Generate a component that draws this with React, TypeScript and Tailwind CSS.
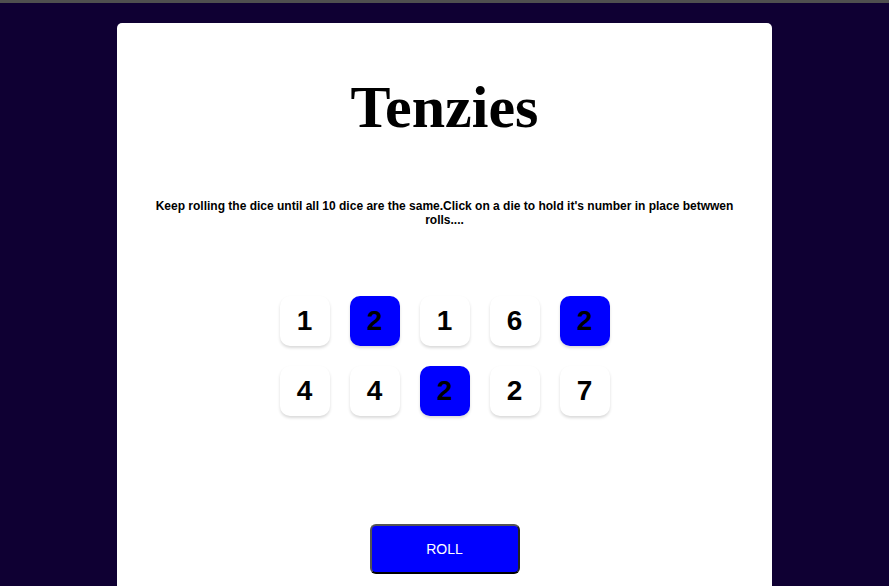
import React from "react";

const dice = [
  { v: 1, held: false },
  { v: 2, held: true },
  { v: 1, held: false },
  { v: 6, held: false },
  { v: 2, held: true },
  { v: 4, held: false },
  { v: 4, held: false },
  { v: 2, held: true },
  { v: 2, held: false },
  { v: 7, held: false },
];

export default function App() {
  return (
    <div className="w-[889px] h-[586px] overflow-hidden bg-[#0f0033] flex flex-col" style={{ fontFamily: '"Liberation Sans", Arial, sans-serif' }}>
      <div className="h-[3px] bg-[#4f4f4f] shrink-0" />
      <div className="mt-[20px] mx-auto w-[655px] h-[640px] bg-white rounded-[5px] flex flex-col items-center shrink-0">
        <h1
          className="mt-[54px] text-[60px] leading-none font-bold text-black"
          style={{ fontFamily: '"Liberation Serif", "Times New Roman", serif' }}
        >
          Tenzies
        </h1>
        <p className="mt-[62px] w-[600px] text-center text-[12px] leading-[14px] font-bold text-black">
          Keep rolling the dice until all 10 dice are the same.Click on a die to hold it's number in place betwwen rolls....
        </p>
        <div className="mt-[69px] grid grid-cols-5 gap-[20px]">
          {dice.map((d, i) => (
            <div
              key={i}
              className={`w-[50px] h-[50px] rounded-[10px] flex items-center justify-center text-[28px] font-bold text-black shadow-[0_2px_3px_rgba(0,0,0,0.15)] ${
                d.held ? "bg-[#0000ff]" : "bg-white"
              }`}
            >
              {d.v}
            </div>
          ))}
        </div>
        <button className="mt-[108px] w-[150px] h-[50px] bg-[#0000ff] text-white text-[14px] rounded-[6px] border-2 border-[#555] border-b-black border-r-[#222]">
          ROLL
        </button>
      </div>
    </div>
  );
}
